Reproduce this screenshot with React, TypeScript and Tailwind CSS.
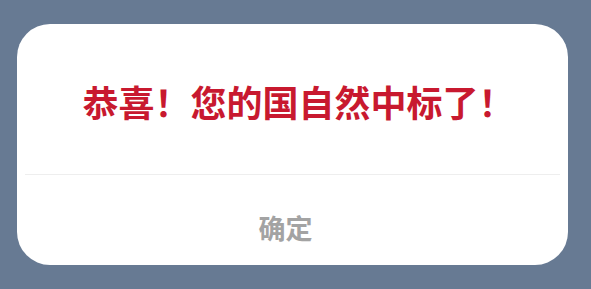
import React from "react";

export default function App() {
  return (
    <div
      className="w-[591px] h-[289px] bg-[#677a93] pt-[24px] pl-[17px]"
      style={{ fontFamily: '"Noto Sans CJK SC", "Noto Sans", sans-serif' }}
    >
      <div className="w-[551px] h-[241px] bg-white rounded-[33px] flex flex-col">
        <div className="h-[150px] flex items-center justify-center pt-[4px] pl-[12px]">
          <h1 className="text-[36px] leading-none font-bold text-[#c8192f]">
            恭喜！您的国自然中标了！
          </h1>
        </div>
        <div className="mx-[8px] h-px bg-[#eeeeee]" />
        <div className="flex-1 flex items-center justify-center pt-[14px] pr-[14px]">
          <button className="text-[27px] leading-none font-bold text-[#a3a3a3]">
            确定
          </button>
        </div>
      </div>
    </div>
  );
}
